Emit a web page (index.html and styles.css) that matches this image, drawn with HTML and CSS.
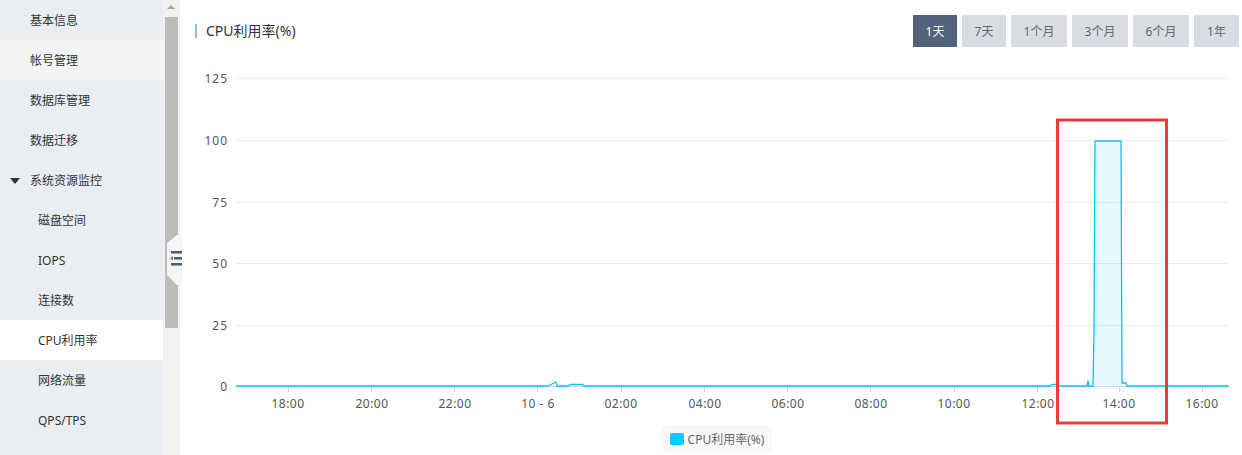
FILE: index.html
```html
<!DOCTYPE html>
<html lang="zh-CN">
<head>
  <meta charset="UTF-8"/>
  <title>CPU利用率</title>
  <link rel="stylesheet" href="styles.css">
</head>
<body>
  <div class="layout">
    <aside class="sidebar">
      <ul class="menu">
        <li>基本信息</li>
        <li class="hover">帐号管理</li>
        <li>数据库管理</li>
        <li>数据迁移</li>
        <li class="group"><span class="caret"></span>系统资源监控</li>
        <li class="sub">磁盘空间</li>
        <li class="sub">IOPS</li>
        <li class="sub">连接数</li>
        <li class="sub active">CPU利用率</li>
        <li class="sub">网络流量</li>
        <li class="sub">QPS/TPS</li>
      </ul>
    </aside>

    <div class="scroll">
      <span class="arrow"></span>
      <div class="thumb"></div>
      <div class="handle">
        <svg width="15" height="50" viewBox="0 0 15 50">
          <path d="M10 0 H15 V50 H10 L0 40 V8 Z" fill="#f4f5f7"/>
          <rect x="4" y="16" width="11" height="2.5" fill="#4d5d74"/>
          <rect x="7" y="22" width="8" height="2.5" fill="#4d5d74"/>
          <rect x="4" y="28" width="11" height="2.5" fill="#4d5d74"/>
          <path d="M3 23.2 L6 21 V25.5 Z" fill="#c0574e"/>
        </svg>
      </div>
    </div>

    <main class="main">
      <div class="head">
        <h2 class="title">CPU利用率(%)</h2>
        <div class="range">
          <button class="on">1天</button>
          <button>7天</button>
          <button class="wide">1个月</button>
          <button class="wide">3个月</button>
          <button class="wide">6个月</button>
          <button class="last">1年</button>
        </div>
      </div>

      <svg class="chart" width="1062" height="378" viewBox="180 47 1062 378">
        <g class="grid">
          <line x1="236" y1="78.5" x2="1229" y2="78.5"/>
          <line x1="236" y1="140.5" x2="1229" y2="140.5"/>
          <line x1="236" y1="202.5" x2="1229" y2="202.5"/>
          <line x1="236" y1="263.5" x2="1229" y2="263.5"/>
          <line x1="236" y1="325.5" x2="1229" y2="325.5"/>
        </g>
        <g class="ylab">
          <text x="228" y="83">125</text>
          <text x="228" y="145">100</text>
          <text x="228" y="207">75</text>
          <text x="228" y="268">50</text>
          <text x="228" y="330">25</text>
          <text x="228" y="391">0</text>
        </g>
        <line class="axis" x1="236" y1="386.5" x2="1229" y2="386.5"/>
        <g class="ticks">
          <line x1="288.5" y1="387" x2="288.5" y2="392"/>
          <line x1="371.5" y1="387" x2="371.5" y2="392"/>
          <line x1="454.5" y1="387" x2="454.5" y2="392"/>
          <line x1="537.5" y1="387" x2="537.5" y2="392"/>
          <line x1="621.5" y1="387" x2="621.5" y2="392"/>
          <line x1="704.5" y1="387" x2="704.5" y2="392"/>
          <line x1="787.5" y1="387" x2="787.5" y2="392"/>
          <line x1="870.5" y1="387" x2="870.5" y2="392"/>
          <line x1="954.5" y1="387" x2="954.5" y2="392"/>
          <line x1="1037.5" y1="387" x2="1037.5" y2="392"/>
          <line x1="1119.5" y1="387" x2="1119.5" y2="392"/>
          <line x1="1202.5" y1="387" x2="1202.5" y2="392"/>
        </g>
        <g class="xlab">
          <text x="288" y="408">18:00</text>
          <text x="372" y="408">20:00</text>
          <text x="455" y="408">22:00</text>
          <text x="538" y="408">10 - 6</text>
          <text x="621" y="408">02:00</text>
          <text x="705" y="408">04:00</text>
          <text x="788" y="408">06:00</text>
          <text x="871" y="408">08:00</text>
          <text x="954" y="408">10:00</text>
          <text x="1038" y="408">12:00</text>
          <text x="1119" y="408">14:00</text>
          <text x="1202" y="408">16:00</text>
        </g>
        <path class="area" d="M1094 386 L1094.5 331 L1095 141 L1121 141 L1122 383 L1122 386 Z"/>
        <path class="series" d="M236 386 L548 386 L552 384 L556 382 L557 386 L568 386 L570 384.5 L583 384.5 L584 386 L1050 386 L1052 384.5 L1056 384.5 L1057 386 L1087 386 L1088 381 L1089 386 L1093 386 L1094 331 L1095 141 L1121 141 L1122 383 L1126 383 L1127 386 L1229 386"/>
        <rect class="mark" x="1057.5" y="120" width="109" height="303"/>
      </svg>

      <div class="legend">
        <span class="swatch"></span>CPU利用率(%)
      </div>
    </main>
  </div>
</body>
</html>
```

FILE: styles.css
```css
:root{
  --side:#eaedf1; --text:#333; --muted:#666;
  --btn:#d9dde3; --btn-on:#536379; --series:#00c6f6;
}
*{box-sizing:border-box;margin:0;padding:0;}
body{font-family:"Noto Sans","Noto Sans CJK SC",sans-serif;color:var(--text);background:#fff;width:1242px;height:455px;overflow:hidden;}
.layout{display:flex;height:455px;}

.sidebar{width:163px;background:var(--side);flex:none;}
.menu{list-style:none;}
.menu li{height:40px;line-height:42px;padding-left:30px;font-size:12px;color:#333;position:relative;}
.menu li.hover{background:#f3f4f6;}
.menu li.active{background:#fff;}
.menu li.sub{padding-left:38px;}
.caret{position:absolute;left:10px;top:18px;border-left:5px solid transparent;border-right:5px solid transparent;border-top:6px solid #333;}

.scroll{width:17px;flex:none;background:#f1f1f1;position:relative;}
.arrow{position:absolute;left:4px;top:5px;border-left:4px solid transparent;border-right:4px solid transparent;border-bottom:4px solid #a3a3a3;}
.thumb{position:absolute;left:2px;top:17px;width:13px;height:311px;background:#bcbcbc;}
.handle{position:absolute;left:4px;top:235px;width:15px;height:50px;z-index:2;}
.handle svg{display:block;}

.main{flex:1;display:flex;flex-direction:column;}
.head{display:flex;justify-content:space-between;padding:15px 3px 0 15px;height:47px;}
.title{font-size:14px;font-weight:normal;color:#333;height:14px;line-height:14px;margin-top:9px;padding-left:9px;border-left:2px solid #8cbbe4;}
.range{display:flex;gap:5px;}
.range button{width:44px;height:32px;padding:0;border:none;background:var(--btn);color:var(--muted);font:12px "Noto Sans","Noto Sans CJK SC",sans-serif;}
.range button.wide{width:56px;}
.range button.last{width:45px;}
.range button.on{background:var(--btn-on);color:#fff;}

.chart{display:block;}
.grid line{stroke:#ececec;stroke-width:1;}
.axis{stroke:#ccd6eb;}
.ticks line{stroke:#ccd6eb;}
.ylab text{font-size:12px;fill:#555;text-anchor:end;letter-spacing:1px;}
.xlab text{font-size:12px;fill:#555;text-anchor:middle;letter-spacing:.5px;}
.series{fill:none;stroke:var(--series);stroke-width:1.3;stroke-linejoin:round;}
.area{fill:rgba(0,198,246,0.1);}
.mark{fill:none;stroke:#f03a3a;stroke-width:3;}

.legend{align-self:center;margin-left:12px;height:28px;display:flex;align-items:center;gap:4px;padding:0 8px;background:#f8f8f8;border-radius:6px;font-size:12px;color:var(--muted);}
.swatch{width:14px;height:12px;border-radius:2px;background:#00ccff;}
```
